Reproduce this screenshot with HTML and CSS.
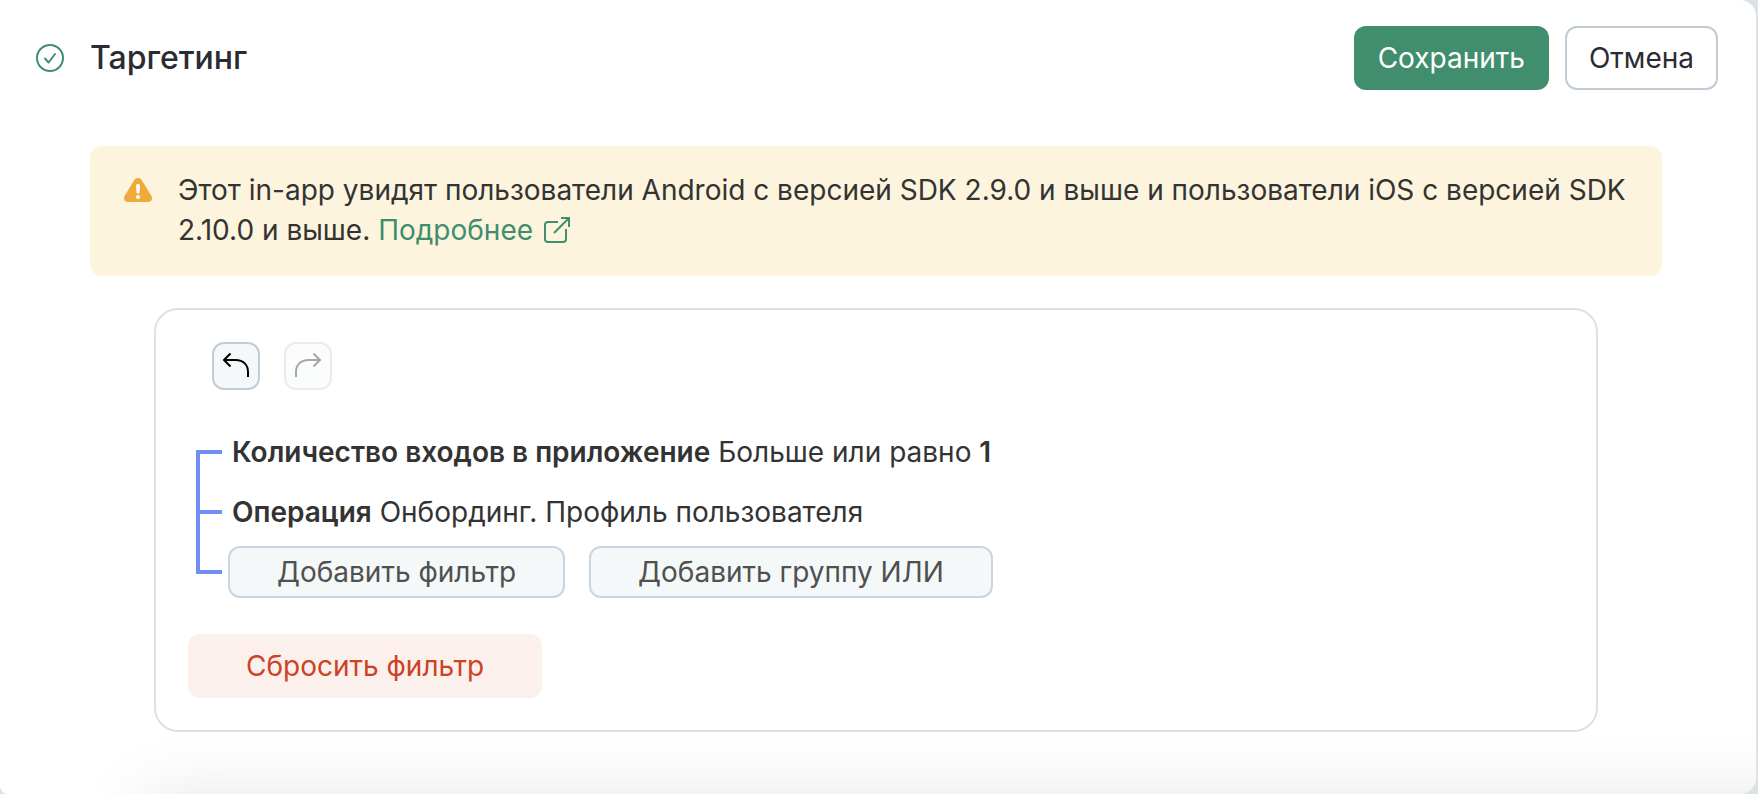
FILE: index.html
```html
<!DOCTYPE html>
<html lang="ru">
<head>
<meta charset="utf-8">
<meta name="viewport" content="width=device-width, initial-scale=1">
<title>Таргетинг</title>
<link rel="stylesheet" href="styles.css">
</head>
<body>
<main class="card">
  <header class="card-header">
    <svg class="status-icon" viewBox="0 0 28 28" fill="none" stroke="currentColor" stroke-width="2" stroke-linecap="round" stroke-linejoin="round" aria-hidden="true">
      <circle cx="14" cy="14" r="13"/>
      <path d="M9 14.500l3.600 4L19 10"/>
    </svg>
    <h1 class="title">Таргетинг</h1>
    <div class="actions">
      <button class="btn btn-primary" type="button">Сохранить</button>
      <button class="btn btn-outline" type="button">Отмена</button>
    </div>
  </header>

  <section class="content">
    <div class="alert">
      <svg class="alert-icon" viewBox="0 0 28 24" aria-hidden="true">
        <path fill="#efaa3c" d="M10 2.400C11 .8 12.400 0 14 0s3 .8 4 2.400l9.300 15.400c1.700 3 .300 6.200-3.100 6.200H3.800C.400 24-1 20.800.700 17.800z"/>
        <path fill="#fff" d="M12 7.600C12 6.600 12.800 6 14 6s2 .600 2 1.600l-.6 6.800c-.1.800-.6 1.200-1.400 1.200s-1.300-.400-1.400-1.200z"/>
        <circle cx="14" cy="19" r="2" fill="#fff"/>
      </svg>
      <p class="alert-text">Этот in-app увидят пользователи Android с версией SDK 2.9.0 и выше и пользователи iOS с версией SDK 2.10.0 и выше. <a class="link" href="#">Подробнее<svg class="link-icon" viewBox="0 0 26 26" fill="none" stroke="currentColor" stroke-width="2" aria-hidden="true"><path d="M14 5H4a3 3 0 0 0-3 3v14a3 3 0 0 0 3 3h15a3 3 0 0 0 3-3V12M10 16L25 1M17 1h8v9"/></svg></a></p>
    </div>

    <div class="panel">
      <div class="history">
        <button class="icon-btn" type="button" aria-label="Отменить действие">
          <svg class="history-icon" viewBox="0 0 28 28" fill="none" stroke="currentColor" stroke-width="2" aria-hidden="true"><path d="M8.500 1.500L2 8l6.500 6.500M2 8h11.500C21.500 8 26 13 26 20v5"/></svg>
        </button>
        <button class="icon-btn" type="button" aria-label="Повторить действие" disabled>
          <svg class="history-icon" viewBox="0 0 28 28" fill="none" stroke="currentColor" stroke-width="2" aria-hidden="true"><path d="M19.500 1.500L26 8l-6.500 6.500M26 8H14.500C6.500 8 2 13 2 20v5"/></svg>
        </button>
      </div>

      <ul class="filters">
        <li class="filter"><p class="filter-text"><b>Количество входов в приложение</b> Больше или равно <b>1</b></p></li>
        <li class="filter"><p class="filter-text"><b>Операция</b> Онбординг. Профиль пользователя</p></li>
        <li class="filter filter-actions">
          <button class="btn btn-soft" type="button">Добавить фильтр</button>
          <button class="btn btn-soft" type="button">Добавить группу ИЛИ</button>
        </li>
      </ul>

      <button class="btn btn-danger" type="button">Сбросить фильтр</button>
    </div>
  </section>
</main>
</body>
</html>
```

FILE: styles.css
```css
* {
  box-sizing: border-box;
}

body {
  margin: 0;
  background: #dbe3e7;
  color: #333;
  font: 400 28px/40px Inter, sans-serif;
}

.card {
  position: relative;
  min-height: 100vh;
  margin-right: 2px;
  overflow: hidden;
  border-radius: 0 16px 16px 8px;
  background: #fff;
}

/* soft shade of the bar that lies below the fold */
.card::after {
  content: "";
  position: absolute;
  top: 100%;
  left: 144px;
  right: -80px;
  height: 80px;
  box-shadow: 0 4px 72px rgba(0, 0, 0, 0.11);
  pointer-events: none;
}

.card-header {
  display: flex;
  align-items: center;
  padding: 26px 38px 0 36px;
}

.status-icon {
  flex: none;
  width: 28px;
  height: 28px;
  margin-right: 26px;
  color: #408e6e;
}

.title {
  margin: 0;
  color: #2b2b33;
  font-size: 32px;
  font-weight: 500;
  line-height: 40px;
}

.actions {
  display: flex;
  gap: 16px;
  margin-left: auto;
}

.btn {
  height: 64px;
  padding: 0 22px;
  border: 2px solid transparent;
  border-radius: 12px;
  font: inherit;
  cursor: pointer;
}

.btn-primary {
  background: #408e6e;
  color: #fff;
}

.btn-outline {
  border-color: #c0ccd5;
  background: #fff;
  color: #2b2b33;
}

.content {
  padding: 56px 94px 60px 90px;
}

.alert {
  display: flex;
  align-items: flex-start;
  gap: 26px;
  padding: 24px 32px 26px 34px;
  border-radius: 12px;
  background: #fdf4de;
}

.alert-icon {
  flex: none;
  width: 28px;
  height: 24px;
  margin-top: 8px;
}

.alert-text {
  margin: 0;
}

.link {
  color: #408e6e;
  text-decoration: none;
}

.link-icon {
  width: 26px;
  height: 26px;
  margin-left: 11px;
  vertical-align: -3px;
}

.panel {
  margin: 32px 64px 0;
  padding: 32px;
  border: 2px solid #dbe2e6;
  border-radius: 24px;
}

.history {
  display: flex;
  gap: 24px;
  padding-left: 24px;
}

.icon-btn {
  display: flex;
  align-items: center;
  justify-content: center;
  width: 48px;
  height: 48px;
  padding: 0;
  border: 2px solid #c0ccd4;
  border-radius: 12px;
  background: #f4f8f9;
  color: #000;
  cursor: pointer;
}

.icon-btn:disabled {
  border-color: #e9ecef;
  background: #fbfdfc;
  color: #a6a6a6;
  cursor: default;
}

.history-icon {
  width: 28px;
  height: 28px;
}

.filters {
  margin: 32px 0;
  padding: 0 0 0 8px;
  list-style: none;
}

.filter {
  position: relative;
  display: flex;
  align-items: center;
  height: 60px;
  padding-left: 36px;
}

/* blue bracket: a tick at each row, a rail between rows */
.filter::before {
  content: "";
  position: absolute;
  top: 28px;
  left: 0;
  width: 26px;
  height: 4px;
  background: #728ff5;
}

.filter:not(:last-child)::after {
  content: "";
  position: absolute;
  top: 28px;
  left: 0;
  width: 4px;
  height: 64px;
  background: #728ff5;
}

.filter-text {
  margin: 0;
}

.filter-actions {
  gap: 24px;
  padding-left: 32px;
}

.filter b {
  font-weight: 600;
}

.btn-soft {
  height: 52px;
  padding: 0 47px;
  border-color: #c8d5e2;
  background: #f4f8f9;
  color: #505050;
}

.btn-danger {
  display: block;
  padding: 0 56px;
  background: #fcf0ed;
  color: #cc4224;
}
```
